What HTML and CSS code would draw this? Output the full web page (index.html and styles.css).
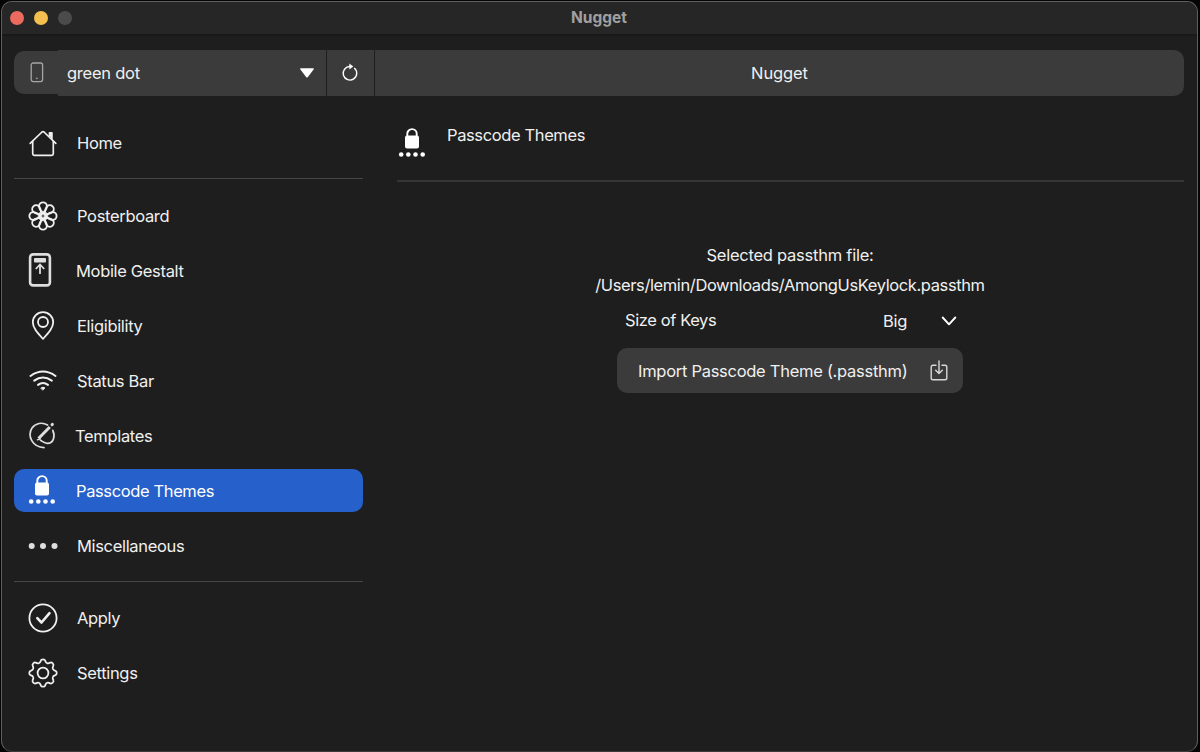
FILE: index.html
```html
<!DOCTYPE html>
<html lang="en">
<head>
    <meta charset="UTF-8">
    <meta name="viewport" content="width=device-width, initial-scale=1.0">
    <title>Nugget</title>
    <link rel="stylesheet" href="styles.css">
</head>
<body>
<svg class="defs" width="0" height="0">
    <symbol id="lock" viewBox="0 0 28 30">
        <path d="M9.3 10.5V6.8a4.7 4.7 0 0 1 9.4 0v3.7" fill="none" stroke="#fff" stroke-width="1.9"/>
        <rect x="7" y="8.600" width="14" height="13" rx="2" fill="#fff"/>
        <g fill="#fff">
            <circle cx="3.2" cy="27.5" r="2.3"/>
            <circle cx="10.3" cy="27.5" r="2.3"/>
            <circle cx="17.5" cy="27.5" r="2.3"/>
            <circle cx="24.7" cy="27.5" r="2.3"/>
        </g>
    </symbol>
</svg>
<div class="window">
    <div class="titlebar">
        <div class="lights">
            <span class="light red"></span>
            <span class="light yellow"></span>
            <span class="light gray"></span>
        </div>
        <div class="title">Nugget</div>
    </div>
    <div class="toolbar">
        <div class="phone-box">
            <svg width="14" height="22" viewBox="0 0 14 22" fill="none" stroke="#a6a6a6">
                <rect x="1.2" y="1" width="11.4" height="18.6" rx="2" stroke-width="1.3"/>
                <circle cx="6.9" cy="16.3" r=".6" fill="#a6a6a6" stroke-width=".6"/>
            </svg>
        </div>
        <div class="device">
            <span>green dot</span>
            <svg width="16" height="10" viewBox="0 0 16 10">
                <path d="M2 .3h12q1.400 0 .6 1.100L8.900 9q-.9 1-1.800 0L1.400 1.400Q.6.3 2 .3z" fill="#fff"/>
            </svg>
        </div>
        <div class="refresh">
            <svg width="18" height="20" viewBox="0 0 18 20" fill="none" stroke="#fff" stroke-width="1.4">
                <path d="M13.200 5A6.800 6.800 0 1 1 9 3.500"/>
                <path d="M8.300.6l4 2.900-4 2.900z" fill="#fff" stroke="none"/>
            </svg>
        </div>
        <div class="app-name">Nugget</div>
    </div>
    <div class="main">
        <div class="sidebar">
            <div class="item">
                <svg class="icon" viewBox="0 0 30 30" fill="none" stroke="currentColor" stroke-width="1.7" stroke-linecap="round" stroke-linejoin="round">
                    <path d="M2.200 15.300L14 4q1-.9 2 0L27.800 15.300"/>
                    <path d="M4.700 13.200v12.600q0 1.600 1.600 1.600h17.400q1.600 0 1.600-1.600V13.200"/>
                    <path d="M21.500 8V4.800h2.400v5.500" fill="currentColor"/>
                </svg>
                <span>Home</span>
            </div>
            <div class="line"></div>
            <div class="item">
                <svg class="icon" viewBox="-15 -15 30 30" fill="none" stroke="currentColor" stroke-width="1.900">
                    <path id="petal" d="M0-2.200C-1.500-4.200-3.900-6.800-3.900-9.700A3.900 3.900 0 0 1 3.900-9.700C3.900-6.800 1.500-4.200 0-2.200z"/>
                    <use href="#petal" transform="rotate(45)"/>
                    <use href="#petal" transform="rotate(90)"/>
                    <use href="#petal" transform="rotate(135)"/>
                    <use href="#petal" transform="rotate(180)"/>
                    <use href="#petal" transform="rotate(225)"/>
                    <use href="#petal" transform="rotate(270)"/>
                    <use href="#petal" transform="rotate(315)"/>
                    <circle r="4.800" stroke-width="1"/>
                </svg>
                <span>Posterboard</span>
            </div>
            <div class="item gestalt">
                <svg class="icon" viewBox="0 0 24 34" fill="none" stroke="#dedede">
                    <rect x="2.100" y="1.400" width="19.800" height="31" rx="3" stroke-width="2.600"/>
                    <rect x="6" y="5" width="12" height="4.600" rx="1" fill="#dedede" stroke="none"/>
                    <path d="M12 21v-9M7.800 16l4.200-4.500 4.200 4.500" stroke-width="1.800"/>
                </svg>
                <span>Mobile Gestalt</span>
            </div>
            <div class="item">
                <svg class="icon" viewBox="0 0 30 30" fill="none" stroke="currentColor" stroke-width="1.800">
                    <path d="M15 27.900C9.500 21.900 4.800 16.900 4.800 11.300a10.200 10.200 0 0 1 20.400 0C25.200 16.900 20.500 21.900 15 27.900z" stroke-linejoin="round"/>
                    <circle cx="15" cy="11" r="5"/>
                </svg>
                <span>Eligibility</span>
            </div>
            <div class="item">
                <svg class="icon" viewBox="0 0 30 30" fill="none" stroke="currentColor" stroke-width="2" stroke-linecap="round">
                    <path d="M2.500 10Q15 1.200 27.500 10"/>
                    <path d="M6.200 14.600Q15 8.200 23.800 14.600"/>
                    <path d="M10 18.900Q15 15 20 18.900"/>
                    <path d="M13 21.900Q15 20.300 17 21.900L15 24z" fill="currentColor" stroke-width=".8"/>
                </svg>
                <span>Status Bar</span>
            </div>
            <div class="item templates">
                <svg class="icon" viewBox="0 0 30 30" fill="none" stroke="#dedede" stroke-width="1.700" stroke-linecap="round">
                    <path d="M19.500 4C14 .8 7.500 2.200 4 7C-1 15 4.500 26.300 16 26.700"/>
                    <path d="M24.800 9.300C27.500 15.500 25.500 22.300 19.500 22.300c-3.200.1-4.600-1.700-7-3.100"/>
                    <path d="M10.500 17.500L21.800 6" stroke-width="3" stroke-linecap="butt"/>
                    <path d="M9.300 18.800l3.200-1" stroke-width="1.300"/>
                    <path d="M24 3.800l.4-.4" stroke-width="2.900"/>
                </svg>
                <span>Templates</span>
            </div>
            <div class="item passcode active">
                <svg class="icon"><use href="#lock"/></svg>
                <span>Passcode Themes</span>
            </div>
            <div class="item">
                <svg class="icon" viewBox="0 0 30 30" fill="#dedede">
                    <circle cx="3.700" cy="15" r="3"/>
                    <circle cx="15" cy="15" r="3"/>
                    <circle cx="26.500" cy="15" r="3"/>
                </svg>
                <span>Miscellaneous</span>
            </div>
            <div class="line second"></div>
            <div class="item">
                <svg class="icon" viewBox="0 0 30 30" fill="none" stroke="currentColor" stroke-linecap="round" stroke-linejoin="round">
                    <circle cx="15" cy="15" r="13.600" stroke-width="1.800"/>
                    <path d="M9.300 15.200l4.200 4.300 8-9.300" stroke-width="2.600"/>
                </svg>
                <span>Apply</span>
            </div>
            <div class="item">
                <svg class="icon" viewBox="-15 -15 30 30" fill="none" stroke="currentColor" stroke-width="1.800">
                    <path id="tooth" d="M-4.090-9.890C-2.600-10.500-2.600-11.500-2.200-12.400C-1.900-13.400-1-13.700 0-13.700C1-13.700 1.900-13.400 2.200-12.400C2.600-11.500 2.600-10.500 4.090-9.890"/>
                    <use href="#tooth" transform="rotate(45)"/>
                    <use href="#tooth" transform="rotate(90)"/>
                    <use href="#tooth" transform="rotate(135)"/>
                    <use href="#tooth" transform="rotate(180)"/>
                    <use href="#tooth" transform="rotate(225)"/>
                    <use href="#tooth" transform="rotate(270)"/>
                    <use href="#tooth" transform="rotate(315)"/>
                    <circle r="5.400"/>
                </svg>
                <span>Settings</span>
            </div>
        </div>
        <div class="content">
            <div class="page-header">
                <svg class="icon"><use href="#lock"/></svg>
                <span>Passcode Themes</span>
            </div>
            <div class="page">
                <div class="label">Selected passthm file:</div>
                <div class="label path">/Users/lemin/Downloads/AmongUsKeylock.passthm</div>
                <div class="size-row">
                    <span class="size-label">Size of Keys</span>
                    <div class="select">
                        <span>Big</span>
                        <svg width="16" height="10" viewBox="0 0 16 10" fill="none" stroke="#fff" stroke-width="1.900" stroke-linecap="round" stroke-linejoin="round">
                            <path d="M1.700 1.500L8 8.300l6.300-6.800"/>
                        </svg>
                    </div>
                </div>
                <div class="import">
                    <span>Import Passcode Theme (.passthm)</span>
                    <svg width="18" height="22" viewBox="0 0 18 22" fill="none" stroke="#d8d8d8" stroke-width="1.400" stroke-linecap="round" stroke-linejoin="round">
                        <path d="M6 5.300H3q-1.800 0-1.800 1.800v10.900Q1.200 19.800 3 19.800h12q1.800 0 1.800-1.800V7.100q0-1.800-1.800-1.800h-3"/>
                        <path d="M9 1v12.500M5.700 10.300L9 13.600l3.300-3.300"/>
                    </svg>
                </div>
            </div>
        </div>
    </div>
</div>
</body>
</html>
```

FILE: styles.css
```css
* {
    box-sizing: border-box;
}

body {
    margin: 0;
    height: 752px;
    padding: 1px 2px 0 1px;
    overflow: hidden;
    background-color: #050505;
    color: #f0f0f0;
    font-family: Inter, "Liberation Sans", sans-serif;
    font-size: 16.5px;
    letter-spacing: -0.33px;
}

.defs {
    position: absolute;
}

.window {
    height: 751px;
    border: 1px solid #5e5e5e;
    border-bottom-color: #3a3a3a;
    border-radius: 11px;
    background-color: #1e1e1e;
    overflow: hidden;
}

.titlebar {
    display: grid;
    grid-template-columns: 1fr auto 1fr;
    height: 34px;
    padding: 0 9px 2px 8px;
    background-color: #262626;
    border-bottom: 2px solid #191919;
    align-items: center;
}

.lights {
    display: flex;
    gap: 10px;
    padding-top: 1px;
}

.light {
    width: 14px;
    height: 14px;
    border-radius: 50%;
}

.red {
    background-color: #ed6a5f;
}

.yellow {
    background-color: #f5bf4f;
}

.gray {
    background-color: #4b4b4b;
}

.title {
    color: #a0a0a0;
    font-size: 15.5px;
    font-weight: 700;
    letter-spacing: 0;
}

.toolbar {
    display: flex;
    height: 46px;
    margin: 14px 13px 0 12px;
    gap: 1px;
}

.toolbar > div {
    display: flex;
    align-items: center;
    background-color: #3b3b3b;
}

.toolbar .phone-box {
    width: 44px;
    height: 43px;
    margin: 1px -1px 0 0;
    padding-left: 16px;
    border-radius: 10px 0 0 10px;
}

.toolbar .device {
    width: 268px;
    padding: 0 11px 0 9px;
    justify-content: space-between;
    letter-spacing: -0.25px;
}

.toolbar .refresh {
    width: 47px;
    padding-right: 2px;
    justify-content: center;
}

.toolbar .app-name {
    flex: 1;
    justify-content: center;
    border-radius: 0 10px 10px 0;
    letter-spacing: -0.1px;
}

.main {
    display: flex;
    padding: 0 13px 0 12px;
    gap: 34px;
}

.sidebar {
    width: 349px;
    padding-top: 25px;
}

.item {
    display: flex;
    align-items: center;
    height: 43px;
    margin-bottom: 12px;
    padding-left: 14px;
    gap: 19px;
    border-radius: 10px;
}

.icon {
    width: 30px;
    height: 30px;
    flex: none;
}

.line {
    height: 1px;
    margin: 14px 0 15px;
    background-color: #474747;
}

.item:has(+ .line) {
    margin-bottom: 0;
}

.line.second {
    margin-bottom: 14px;
}

.gestalt {
    gap: 24px;
}

.gestalt .icon {
    width: 24px;
    height: 34px;
    margin-bottom: 2px;
}

.templates {
    gap: 17px;
}

.passcode {
    padding-left: 13px;
    letter-spacing: -0.38px;
}

.passcode .icon {
    margin-bottom: 3px;
}

.active {
    background-color: #2660ca;
    color: #fff;
}

.content {
    flex: 1;
}

.page-header {
    display: flex;
    height: 86px;
    padding: 31px 0 0 0;
    gap: 20px;
    border-bottom: 2px solid #353535;
    letter-spacing: -0.38px;
}

.page-header span {
    margin-top: -2px;
}

.page {
    display: flex;
    flex-direction: column;
    align-items: center;
    padding: 58px 1px 0 0;
}

.label {
    height: 30px;
    line-height: 30px;
    letter-spacing: -0.25px;
}

.label.path {
    letter-spacing: -0.39px;
}

.size-row {
    display: flex;
    align-items: center;
    width: 346px;
    height: 48px;
    padding: 0 6px 8px 8px;
    justify-content: space-between;
}

.size-label {
    letter-spacing: -0.4px;
}

.select {
    display: flex;
    align-items: center;
    gap: 34px;
    padding-top: 2px;
}

.import {
    display: flex;
    align-items: center;
    justify-content: space-between;
    width: 346px;
    height: 45px;
    padding: 0 15px 0 21px;
    border-radius: 10px;
    background-color: #3b3b3b;
    letter-spacing: -0.28px;
}
```
